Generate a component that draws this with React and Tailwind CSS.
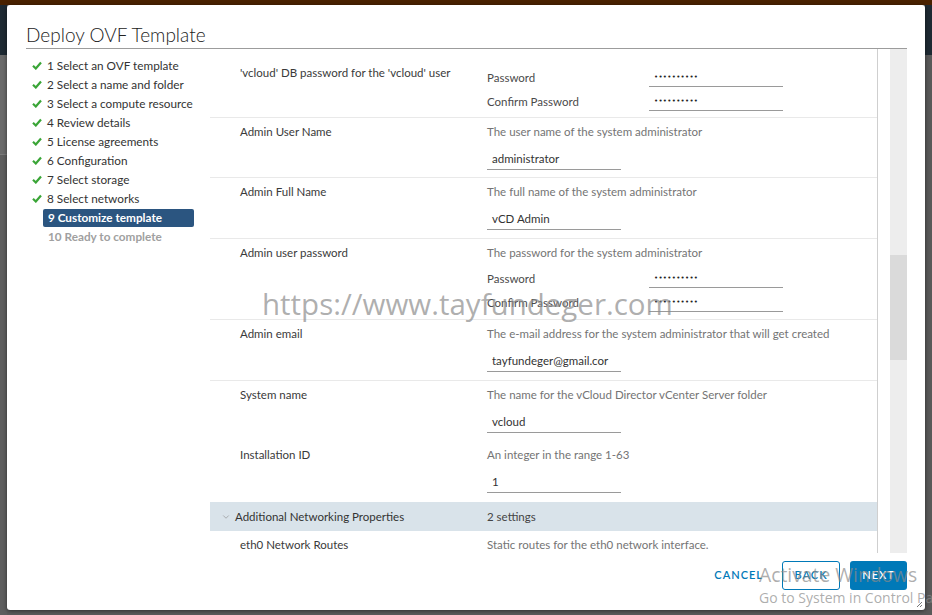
import { ChevronDown } from 'lucide-react';

const steps = [
  '1 Select an OVF template',
  '2 Select a name and folder',
  '3 Select a compute resource',
  '4 Review details',
  '5 License agreements',
  '6 Configuration',
  '7 Select storage',
  '8 Select networks',
];

const Check = () => (
  <svg width="10" height="9" viewBox="0 0 10 9" className="shrink-0">
    <path d="M1 4.8 L3.8 7.5 L9 1.5" fill="none" stroke="#3aa537" strokeWidth="2.2" />
  </svg>
);

const Dots = () => (
  <span className="font-['DejaVu_Sans',sans-serif] text-[7px] tracking-[0.3px] text-[#222]">••••••••••</span>
);

const PasswordLine = ({ label, className = '' }) => (
  <div className={`flex items-center h-[18px] ${className}`}>
    <span className="w-[162px] text-[#4a4a4a]">{label}</span>
    <div className="w-[134px] h-[18px] border-b border-[#9a9a9a] pl-[5px] flex items-center">
      <Dots />
    </div>
  </div>
);

const TextInput = ({ value }) => (
  <div className="mt-[10px] w-[134px] h-[21px] border-b border-[#9a9a9a] pl-[5px] flex items-center text-[#333]">
    {value}
  </div>
);

const Row = ({ label, desc, children, last }) => (
  <div className={`flex pt-[7px] ${last ? '' : 'border-b border-[#e9e9e9]'}`}>
    <div className="w-[277px] pl-[30px] leading-[14px] text-[#3a3a3a]">{label}</div>
    <div className="flex-1">
      <div className="leading-[14px] text-[#747474]">{desc}</div>
      {children}
    </div>
  </div>
);

const App = () => {
  return (
    <div className="w-[932px] h-[615px] overflow-hidden bg-[#5b5b5b] font-['Lato',sans-serif] text-[11.5px] relative">
      <div className="h-[5px] bg-[#4a2200]" />
      <div className="flex h-[610px]">
        <div className="w-[7px] flex flex-col">
          <div className="h-[50px] bg-[#1e2a33]" />
          <div className="h-[100px] bg-[#6a6a6a] border-b border-[#7a7a7a]" />
          <div className="flex-1 bg-[#5e5e5e]" />
        </div>

        {/* Dialog */}
        <div className="w-[918px] h-[605px] bg-white rounded-[3px] shadow-[0_1px_4px_rgba(0,0,0,0.5)] flex flex-col relative">
          <div className="ml-[19px] mr-[18px] h-[44px] border-b border-[#9c9c9c] flex items-end pb-[1px]">
            <h1 className="text-[19px] font-light text-[#222] leading-[24px]">Deploy OVF Template</h1>
          </div>

          <div className="flex h-[504px]">
            {/* Steps */}
            <div className="w-[184px] ml-[19px] pt-[7px] text-[11.75px]">
              {steps.map((s) => (
                <div key={s} className="h-[19px] flex items-center pl-[6px]">
                  <div className="w-[11px]"><Check /></div>
                  <span className="pl-[4px] text-[#333]">{s}</span>
                </div>
              ))}
              <div className="h-[19px] flex items-center pl-[17px]">
                <div className="w-[151px] h-[18px] bg-[#2b5580] rounded-[2px] flex items-center pl-[5px] text-white font-bold">
                  9 Customize template
                </div>
              </div>
              <div className="h-[19px] flex items-center pl-[22px] text-[#a0a0a0] font-bold">
                10 Ready to complete
              </div>
            </div>

            {/* Content */}
            <div className="w-[668px] border-r border-[#cfcfcf] overflow-hidden">
              <div className="flex pt-[17px] pb-[6px] border-b border-[#e9e9e9]">
                <div className="w-[277px] pl-[30px] leading-[14px] text-[#3a3a3a]">'vcloud' DB password for the 'vcloud' user</div>
                <div className="flex-1 pt-[3px]">
                  <PasswordLine label="Password" />
                  <PasswordLine label="Confirm Password" className="mt-[6px]" />
                </div>
              </div>

              <Row label="Admin User Name" desc="The user name of the system administrator">
                <TextInput value="administrator" />
                <div className="h-[7px]" />
              </Row>
              <Row label="Admin Full Name" desc="The full name of the system administrator">
                <TextInput value="vCD Admin" />
                <div className="h-[8px]" />
              </Row>
              <Row label="Admin user password" desc="The password for the system administrator">
                <PasswordLine label="Password" className="mt-[10px]" />
                <PasswordLine label="Confirm Password" className="mt-[6px]" />
                <div className="h-[7px]" />
              </Row>
              <Row label="Admin email" desc="The e-mail address for the system administrator that will get created">
                <TextInput value="tayfundeger@gmail.cor" />
                <div className="h-[8px]" />
              </Row>
              <Row label="System name" desc="The name for the vCloud Director vCenter Server folder" last>
                <TextInput value="vcloud" />
                <div className="h-[8px]" />
              </Row>
              <Row label="Installation ID" desc="An integer in the range 1-63" last>
                <TextInput value="1" />
                <div className="h-[9px]" />
              </Row>

              <div className="flex items-center h-[29px] bg-[#d9e3ea]">
                <div className="w-[277px] flex items-center pl-[11px] text-[#333]">
                  <ChevronDown className="w-[10px] h-[10px] text-[#8a8a8a] mr-[4px]" strokeWidth={1.5} />
                  Additional Networking Properties
                </div>
                <div className="text-[#444]">2 settings</div>
              </div>
              <div className="flex pt-[7px]">
                <div className="w-[277px] pl-[30px] leading-[14px] text-[#3a3a3a]">eth0 Network Routes</div>
                <div className="leading-[14px] text-[#747474]">Static routes for the eth0 network interface.</div>
              </div>
            </div>

            {/* Scrollbar */}
            <div className="ml-[12px] w-[17px] bg-[#ededed] flex flex-col">
              <div className="h-[206px]" />
              <div className="h-[105px] bg-[#dadada]" />
            </div>
          </div>

          {/* Footer */}
          <div className="flex justify-end items-start pt-[8px] pr-[18px] gap-[10px]">
            <button className="h-[29px] px-[9px] text-[#0079b8] font-semibold tracking-[1px] text-[11px]">CANCEL</button>
            <button className="h-[29px] w-[58px] border border-[#0079b8] rounded-[3px] text-[#0079b8] font-semibold tracking-[1px] text-[11px]">BACK</button>
            <button className="h-[29px] w-[57px] bg-[#0079b8] rounded-[3px] text-white font-semibold tracking-[1px] text-[11px]">NEXT</button>
          </div>

          <svg width="8" height="8" viewBox="0 0 8 8" className="absolute right-[2px] bottom-[2px]">
            <path d="M7 2 L2 7 M7 5 L5 7" stroke="#777" strokeWidth="1" />
          </svg>
        </div>

        <div className="w-[7px] flex flex-col">
          <div className="h-[50px] bg-[#1e2a33]" />
          <div className="flex-1 bg-[#595959]" />
        </div>
      </div>

      {/* Watermarks */}
      <div className="absolute left-[262px] top-[287px] text-[29.5px] leading-[34px] font-['Open_Sans',sans-serif] text-[#8c8c8c]/70 pointer-events-none">
        https://www.tayfundeger.com
      </div>
      <div className="absolute left-[759px] top-[562px] text-[19.3px] leading-[26px] font-['Open_Sans',sans-serif] text-[#8a8a8a]/70 pointer-events-none">
        Activate Windows
      </div>
      <div className="absolute left-[759px] top-[588px] text-[14px] leading-[20px] whitespace-nowrap font-['Open_Sans',sans-serif] text-[#8a8a8a]/70 pointer-events-none">
        Go to System in Control Panel to activate Windows.
      </div>
    </div>
  );
};

export default App;
